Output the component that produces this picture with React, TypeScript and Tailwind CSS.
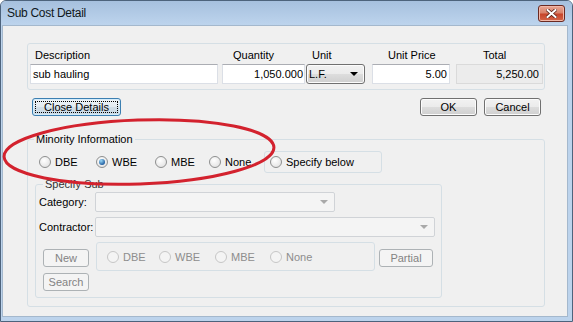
import clsx from "clsx";

function Radio({ checked, disabled }: { checked?: boolean; disabled?: boolean }) {
  return (
    <span
      className={clsx(
        "inline-flex size-[12px] shrink-0 items-center justify-center rounded-full border",
        disabled
          ? "border-[#c6c6c6] bg-[#f4f4f4]"
          : "border-[#8e8f8f] bg-[radial-gradient(circle_at_40%_35%,#ffffff,#dcdcdc)]"
      )}
    >
      {checked && (
        <span className="size-[6px] rounded-full bg-[radial-gradient(circle_at_35%_30%,#9ad8f7,#1c5a9e_75%)]" />
      )}
    </span>
  );
}

function Option({
  label,
  checked,
  disabled,
  width,
}: {
  label: string;
  checked?: boolean;
  disabled?: boolean;
  width: string;
}) {
  return (
    <div className={clsx("flex items-center gap-[4px]", width)}>
      <Radio checked={checked} disabled={disabled} />
      <span className={disabled ? "text-[#8d8d8d]" : "text-black"}>{label}</span>
    </div>
  );
}

function Button({
  children,
  width,
  disabled,
}: {
  children: string;
  width: string;
  disabled?: boolean;
}) {
  return (
    <div
      className={clsx(
        "flex h-[18px] items-center justify-center rounded-[3px] border",
        width,
        disabled
          ? "border-[#adb2b5] bg-[#f4f4f4] text-[#838383]"
          : "border-[#707070] bg-[linear-gradient(#f2f2f2_0%,#ebebeb_50%,#dddddd_50%,#cfcfcf_100%)] text-black shadow-[inset_0_0_0_1px_#fcfcfc]"
      )}
    >
      {children}
    </div>
  );
}

function Combo({ width }: { width: string }) {
  return (
    <div
      className={clsx(
        "flex h-[20px] items-center justify-end rounded-[2px] border border-[#d0d3d7] bg-[#f4f4f4] pr-[6px]",
        width
      )}
    >
      <span className="h-0 w-0 border-x-[4px] border-t-[4px] border-x-transparent border-t-[#a9a9a9]" />
    </div>
  );
}

export default function App() {
  return (
    <div className="relative flex h-[322px] w-[573px] flex-col overflow-hidden rounded-t-[6px] border border-[#4d637c] bg-[#bcd3ec] font-['Liberation_Sans',Arial,sans-serif] text-[11px] leading-[14px] text-black">
      <div className="flex h-[24px] shrink-0 items-center justify-between bg-gradient-to-b from-[#a6c0de] to-[#bdd4ed] pl-[6px] pr-[7px]">
        <span className="text-[12px] tracking-[-0.3px] text-[#101820]">Sub Cost Detail</span>
        <div className="flex h-[17px] w-[27px] items-center justify-center rounded-[3px] border border-[#6b2a22] bg-[linear-gradient(#e9a795_0%,#d9826b_45%,#c7452b_55%,#d4664a_100%)] shadow-[inset_0_0_0_1px_#f1b7a8]">
          <svg width="11" height="9" viewBox="0 0 11 9">
            <path d="M1.5 1 L9.5 8 M9.5 1 L1.5 8" stroke="#5a2018" strokeWidth="3.6" strokeLinecap="square" />
            <path d="M1.5 1 L9.5 8 M9.5 1 L1.5 8" stroke="#ffffff" strokeWidth="2" strokeLinecap="square" />
          </svg>
        </div>
      </div>

      <div className="flex flex-1 flex-col pb-[4px] pl-[1px] pr-[4px]">
        <div className="flex-1 border border-[#a4b8cd] bg-[#f0f0f0]">
          <div className="ml-[24px] mt-[17px] h-[47px] w-[518px] rounded-[3px] border border-[#d5dfe5] pl-[2px] pt-[4px]">
            <div className="flex">
              <div className="w-[188px]">
                <div className="pl-[5px]">Description</div>
                <div className="mt-[2px] flex h-[20px] items-center border border-[#dbdfe6] border-t-[#abadb3] bg-white pl-[2px]">
                  sub hauling
                </div>
              </div>
              <div className="ml-[4px] w-[83px]">
                <div className="pl-[11px]">Quantity</div>
                <div className="mt-[2px] flex h-[20px] items-center justify-end border border-[#dbdfe6] border-t-[#abadb3] bg-white pr-[1px]">
                  1,050.000
                </div>
              </div>
              <div className="ml-[1px] w-[59px]">
                <div className="pl-[6px]">Unit</div>
                <div className="mt-[2px] flex h-[20px] items-center justify-between rounded-[3px] border border-[#707070] bg-[linear-gradient(#f2f2f2_0%,#ebebeb_50%,#dddddd_50%,#cfcfcf_100%)] pl-[2px] pr-[6px] shadow-[inset_0_0_0_1px_#fcfcfc]">
                  <span>L.F.</span>
                  <span className="h-0 w-0 border-x-[4px] border-t-[4px] border-x-transparent border-t-black" />
                </div>
              </div>
              <div className="ml-[7px] w-[78px]">
                <div className="pl-[16px]">Unit Price</div>
                <div className="mt-[2px] flex h-[20px] items-center justify-end border border-[#dbdfe6] border-t-[#abadb3] bg-white pr-[2px]">
                  5.00
                </div>
              </div>
              <div className="ml-[6px] w-[87px]">
                <div className="pl-[27px]">Total</div>
                <div className="mt-[2px] flex h-[20px] items-center justify-end border border-[#dadada] bg-[#ececec] pr-[3px]">
                  5,250.00
                </div>
              </div>
            </div>
          </div>

          <div className="ml-[24px] mt-[8px] flex w-[518px] items-center justify-between pl-[5px] pr-[4px]">
            <div className="flex h-[18px] w-[89px] items-center justify-center rounded-[3px] border border-[#3c7fb1] bg-[linear-gradient(#eef3f7_0%,#e3ebf1_50%,#d3dfe8_50%,#c8d8e4_100%)] p-[2px] shadow-[inset_0_0_0_1px_#d4ecfb]">
              <div className="flex h-full w-full items-center justify-center border border-dotted border-black">
                Close Details
              </div>
            </div>
            <div className="flex gap-[7px]">
              <Button width="w-[57px]">OK</Button>
              <Button width="w-[57px]">Cancel</Button>
            </div>
          </div>

          <fieldset className="ml-[24px] mt-[16px] h-[175px] w-[518px] rounded-[3px] border border-[#d5dfe5]">
            <legend className="ml-[6px] px-[2px] leading-[14px]">Minority Information</legend>
            <div className="mt-[5px] flex h-[22px] items-center pl-[11px]">
              <Option label="DBE" width="w-[57px]" />
              <Option label="WBE" checked width="w-[59px]" />
              <Option label="MBE" width="w-[54px]" />
              <Option label="None" width="w-[55px]" />
              <div className="flex h-[22px] w-[118px] items-center rounded-[3px] border border-[#d5dfe5] pl-[5px]">
                <Option label="Specify below" width="w-auto" />
              </div>
            </div>

            <fieldset className="ml-[7px] mt-[4px] h-[121px] w-[407px] rounded-[3px] border border-[#d5dfe5]">
              <legend className="ml-[7px] px-[2px] leading-[14px] text-[#333333]">Specify Sub</legend>
              <div className="pl-[3px]">
                <div className="mt-[1px] flex h-[20px] items-center">
                  <span className="w-[56px]">Category:</span>
                  <Combo width="w-[240px]" />
                </div>
                <div className="mt-[5px] flex h-[20px] items-center">
                  <span className="w-[56px]">Contractor:</span>
                  <Combo width="w-[340px]" />
                </div>
                <div className="mt-[5px] flex items-start pl-[4px]">
                  <div className="flex flex-col">
                    <div className="mt-[7px]">
                      <Button width="w-[46px]" disabled>New</Button>
                    </div>
                    <div className="mt-[6px]">
                      <Button width="w-[46px]" disabled>Search</Button>
                    </div>
                  </div>
                  <div className="ml-[7px] flex h-[29px] w-[279px] items-center rounded-[3px] border border-[#d5dfe5] pl-[10px]">
                    <Option label="DBE" disabled width="w-[52px]" />
                    <Option label="WBE" disabled width="w-[56px]" />
                    <Option label="MBE" disabled width="w-[55px]" />
                    <Option label="None" disabled width="w-auto" />
                  </div>
                  <div className="ml-[4px] mt-[7px]">
                    <Button width="w-[54px]" disabled>Partial</Button>
                  </div>
                </div>
              </div>
            </fieldset>
          </fieldset>
        </div>
      </div>

      <svg className="pointer-events-none absolute left-0 top-0" width="573" height="322">
        <ellipse
          cx="138"
          cy="151"
          rx="135"
          ry="32"
          transform="rotate(-2 138 151)"
          fill="none"
          stroke="#d3222e"
          strokeWidth="3"
        />
      </svg>
    </div>
  );
}
